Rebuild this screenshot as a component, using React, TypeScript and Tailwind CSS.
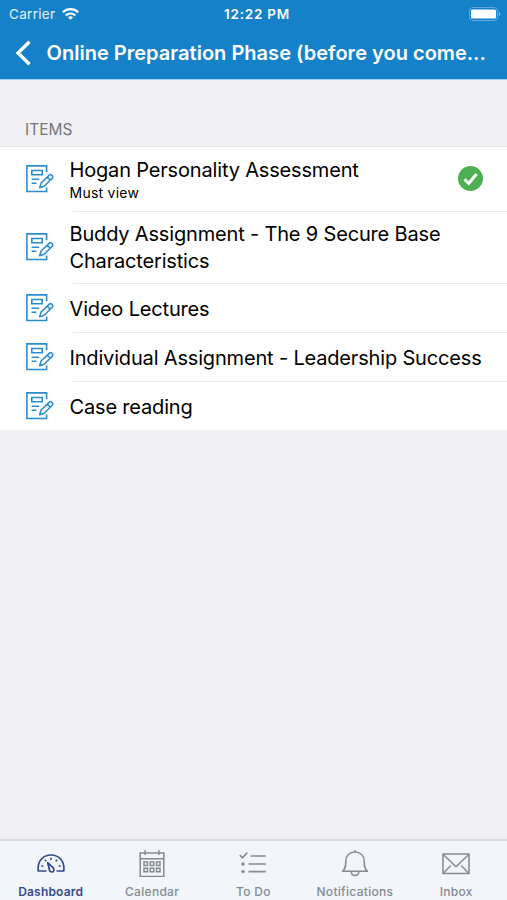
import type { ReactNode } from 'react';
import { clsx } from 'clsx';

type Item = {
  title: string;
  subtitle?: string;
  done?: boolean;
  row: string;
  pad: string;
};

const items: Item[] = [
  { title: 'Hogan Personality Assessment', subtitle: 'Must view', done: true, row: 'h-16', pad: 'pt-px' },
  { title: 'Buddy Assignment - The 9 Secure Base Characteristics', row: 'h-[72px]', pad: 'pt-px' },
  { title: 'Video Lectures', row: 'h-[49px]', pad: 'pt-[3px]' },
  { title: 'Individual Assignment - Leadership Success', row: 'h-[49px]', pad: 'pt-[3px]' },
  { title: 'Case reading', row: 'h-[49px]', pad: 'pt-1' },
];

function AssignmentIcon() {
  return (
    <svg className="w-7 h-7 shrink-0" viewBox="0 0 28 28" fill="none" stroke="#2b8dd0" strokeWidth={1.6}>
      <path d="M20.6 7.2V.9H.9v25.6h19.7v-4" />
      <path d="M5.8 5.5h10.4v4.3H5.8zM5.6 14.2h7.6M5.6 18.2h4.8" />
      <path d="M13.7 22.7l1.4-4.7 8.3-7.8c.7-.7 1.7-.7 2.4 0l.5.6c.7.7.6 1.7-.1 2.4l-8 8zM21.3 12.2l3 3" strokeLinejoin="round" />
    </svg>
  );
}

function WifiIcon() {
  return (
    <svg className="w-[17px] h-3" viewBox="0 0 17 12" fill="none" stroke="white" strokeWidth={2.2}>
      <path d="M.8 4.3c4.4-4.2 11-4.2 15.4 0M3.7 7.4c2.8-2.5 6.8-2.5 9.6 0" />
      <path d="M8.5 11.8L5.9 9.2c1.5-1.3 3.7-1.3 5.2 0z" fill="white" stroke="none" />
    </svg>
  );
}

function BatteryIcon() {
  return (
    <svg className="w-8 h-[14px]" viewBox="0 0 32 14" fill="none">
      <rect x="0.5" y="0.5" width="28" height="13" rx="3.5" stroke="#64aadd" />
      <rect x="2" y="2.5" width="25" height="9" rx="1.5" fill="white" />
      <path d="M30 5v4c1.6-.6 1.6-3.4 0-4z" fill="#8fc3e8" />
    </svg>
  );
}

function TabIcon({ children }: { children: ReactNode }) {
  return (
    <svg className="w-7 h-7" viewBox="0 0 28 28" fill="none" stroke="currentColor" strokeWidth={1.5}>
      {children}
    </svg>
  );
}

const tabs = [
  {
    label: 'Dashboard',
    icon: (
      <>
        <path d="M9.500 22H1.200C.2 12.200 6 6 14 6s13.800 6.200 12.800 16h-7.300" strokeWidth={1.7} strokeLinejoin="round" />
        <path d="M10.700 13.500l5.500 5.300c1.600 2.100.4 4.200-1.200 4.200s-2.700-1.100-2.800-3z" strokeWidth={1.7} strokeLinejoin="round" />
        <path d="M14 8.700v2.200M7.800 10.700l1.400 1.600M20.200 10.700l-1.400 1.600M4.300 16.700l2 .7M23.700 16.700l-2 .7" />
      </>
    ),
  },
  {
    label: 'Calendar',
    icon: (
      <>
        <path d="M2.200 4h23.600v23.500H2.200zM2.200 9.700h23.600M7 1v5M21 1v5" />
        <path d="M6 13h3.500v3.500H6zM12.250 13h3.500v3.500h-3.500zM18.500 13H22v3.500h-3.500zM6 19.300h3.500v3.500H6zM12.250 19.300h3.500v3.500h-3.500zM18.500 19.300H22v3.500h-3.500z" />
      </>
    ),
  },
  {
    label: 'To Do',
    icon: (
      <>
        <path d="M.8 6.200l2.700 2.600L8.200 3.600M11.500 7h15.300M9.500 15h17.300M9.500 22.600h17.300" strokeWidth={1.700} />
        <circle cx="4" cy="15" r="1.700" fill="currentColor" stroke="none" />
        <circle cx="4" cy="22.600" r="1.700" fill="currentColor" stroke="none" />
      </>
    ),
  },
  {
    label: 'Notifications',
    icon: (
      <>
        <path d="M14 1v2M1.500 22.300h25c-3.300-2.600-3.300-6-3.300-10.300C23.200 6.500 19.500 3 14 3s-9.200 3.500-9.200 9c0 4.300 0 7.700-3.300 10.300z" strokeLinejoin="round" />
        <path d="M10.200 22.500c.3 5.300 7.300 5.300 7.600 0" />
      </>
    ),
  },
  {
    label: 'Inbox',
    icon: (
      <>
        <path d="M1 5h26v19.500H1z" />
        <path d="M1.300 5.500L14 17.700 26.700 5.500M1.500 24l7.200-7.500M26.500 24l-7.200-7.500" />
      </>
    ),
  },
];

export default function App() {
  return (
    <div className="flex flex-col w-[507px] h-[900px] overflow-hidden bg-[#efeff4] font-['Inter','Liberation_Sans',sans-serif]">
      <header className="h-20 shrink-0 bg-[#1581c9] border-b border-[#a3d0ee] text-white">
        <div className="grid grid-cols-3 items-center h-[27px] pl-[9px] pr-1.5 text-[13.5px]">
          <div className="flex items-center gap-[7px] pt-px text-white/90">
            <span className="tracking-[0.3px]">Carrier</span>
            <WifiIcon />
          </div>
          <span className="pt-px pl-1 text-center font-semibold text-[13.5px] tracking-[0.75px]">12:22 PM</span>
          <div className="flex justify-end">
            <BatteryIcon />
          </div>
        </div>
        <div className="flex items-center h-[51px] pl-[15px]">
          <svg className="w-4 h-[26px] shrink-0" viewBox="0 0 16 26" fill="none" stroke="white" strokeWidth={3.4}>
            <path d="M14.500 1.800L3 13l11.500 11.200" />
          </svg>
          <h1 className="ml-[15.5px] whitespace-nowrap text-[20px] font-semibold tracking-[0.02px]">
            Online Preparation Phase (before you come...
          </h1>
        </div>
      </header>

      <main className="flex-1">
        <h2 className="h-[67px] pt-10 pl-[25px] text-[15.5px] leading-5 text-[#76767b] border-b border-[#e4e4e8]">ITEMS</h2>
        <ul className="bg-white">
          {items.map((item, i) => (
            <li key={item.title} className={clsx('flex items-center pl-[26px]', item.row)}>
              <AssignmentIcon />
              <div className="relative flex flex-1 items-center h-full ml-[15.5px]">
                <div className={clsx('flex-1 text-black', item.pad)}>
                  <p className="text-[20px] leading-[27px] tracking-[-0.17px]">{item.title}</p>
                  {item.subtitle && <p className="text-[14px] leading-[18px] tracking-[0.25px]">{item.subtitle}</p>}
                </div>
                {item.done && (
                  <svg className="w-[25px] h-[25px] mr-6 mb-0.5 shrink-0" viewBox="0 0 25 25" fill="none">
                    <circle cx="12.500" cy="12.500" r="12.500" fill="#4caf50" />
                    <path d="M6.500 13.200l4.200 4.300 7.800-9.500" stroke="white" strokeWidth={3} />
                  </svg>
                )}
                {i < items.length - 1 && <div className="absolute -bottom-px left-[3px] right-0 h-px bg-[#e8e8ea]" />}
              </div>
            </li>
          ))}
        </ul>
      </main>

      <nav className="grid grid-cols-5 h-[61px] shrink-0 pt-2 bg-[#f2f5f9] border-t-2 border-[#dadbe0]">
        {tabs.map((tab, i) => (
          <div key={tab.label} className={clsx('flex flex-col items-center', i === 0 ? 'text-[#354a8c]' : 'text-[#858b94]')}>
            <TabIcon>{tab.icon}</TabIcon>
            <span className={clsx('mt-[7px] text-[12px] leading-4', i === 0 ? 'font-semibold tracking-[0.2px]' : 'font-medium tracking-[0.3px]')}>
              {tab.label}
            </span>
          </div>
        ))}
      </nav>
    </div>
  );
}
